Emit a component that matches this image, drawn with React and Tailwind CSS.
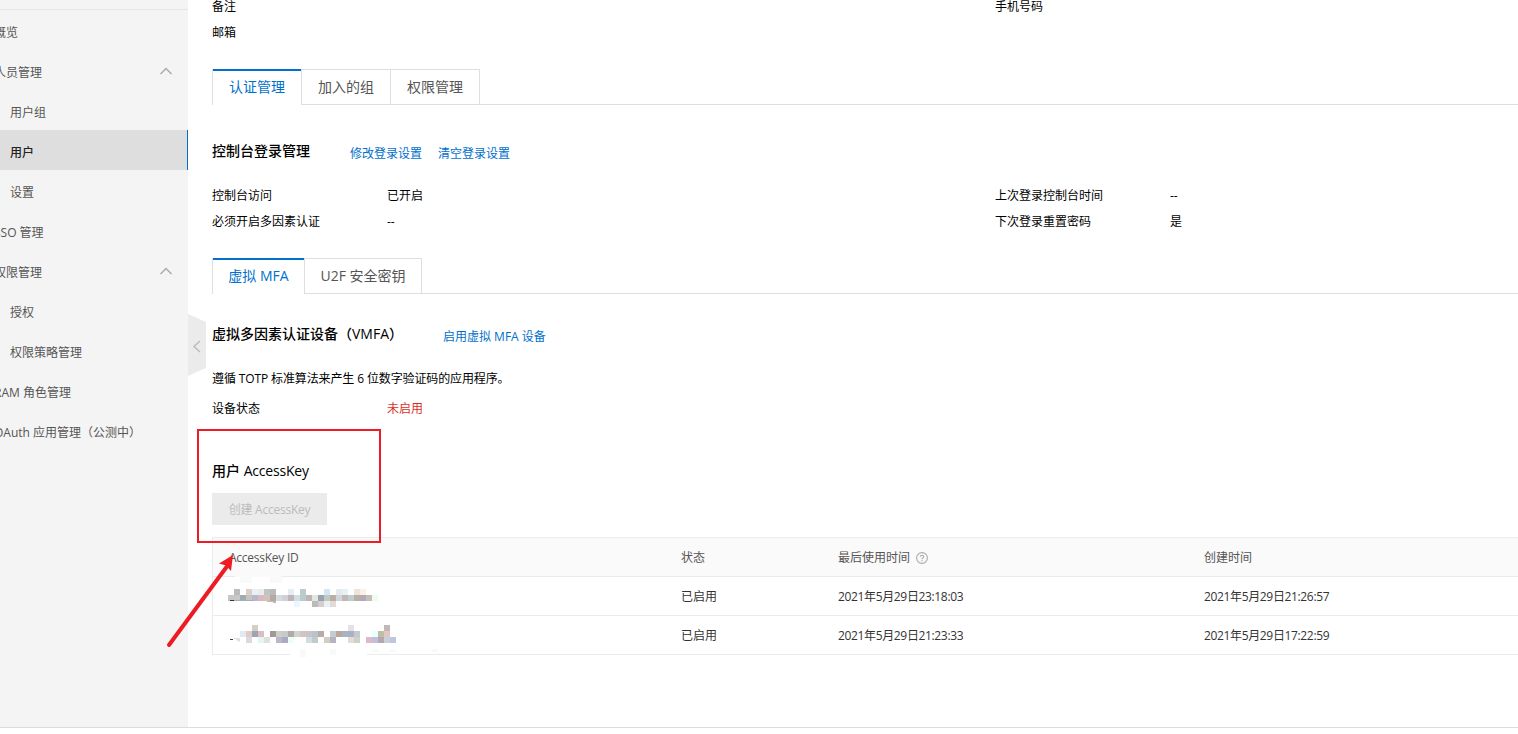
import React from 'react'

const NAV = [
  { label: '概览' },
  { label: '人员管理', open: true },
  { label: '用户组', sub: true },
  { label: '用户', sub: true, active: true },
  { label: '设置', sub: true },
  { label: 'SSO 管理' },
  { label: '权限管理', open: true },
  { label: '授权', sub: true },
  { label: '权限策略管理', sub: true },
  { label: 'RAM 角色管理' },
  { label: 'OAuth 应用管理（公测中）' },
]

const KEYS = [
  { status: '已启用', lastUsed: '2021年5月29日23:18:03', created: '2021年5月29日21:26:57' },
  { status: '已启用', lastUsed: '2021年5月29日21:23:33', created: '2021年5月29日17:22:59' },
]

// 6px blocks hiding the key ids: one line per block row, column -> colour
const MOSAIC = [
  [
    { 1: '#bbbbbb', 3: '#e0cdc9', 4: '#e6f1f9', 5: '#ebebef', 6: '#bdc5c2', 7: '#bbbbbb', 10: '#e4eef6', 12: '#bccccb', 16: '#cfe6f6', 18: '#e4eaeb', 19: '#e4f1f7', 21: '#ece3d9', 22: '#f9f1e6' },
    { 0: '#c7c7c7', 1: '#c7c7c7', 2: '#9eabb1', 3: '#c9c3c0', 4: '#b9b7c9', 5: '#d8b9c1', 6: '#d2c2b7', 7: '#b5aaa0', 8: '#d2dce3', 9: '#d0d0d9', 10: '#c1b4b8', 11: '#d2dee3', 12: '#bccac9', 13: '#c1b4b8', 14: '#e3e5e0', 15: '#93a5af', 16: '#c4c8be', 17: '#b9afa4', 18: '#d0d6e0', 19: '#c2b7b5', 20: '#c1cccf', 21: '#b9afa4', 22: '#b2aab6', 23: '#c7bcba', 24: '#ecfdee' },
    { 11: '#eaf7ff', 14: '#bbbbbb', 15: '#d8cdca', 16: '#e6f2f8', 17: '#e3dbd1' },
  ],
  [
    { 4: '#d8cdc6', 20: '#e6e1e6', 26: '#c1b7b9' },
    { 2: '#e1e9f2', 3: '#e0cbc7', 4: '#9aa5b5', 5: '#ddbcc5', 7: '#a19898', 8: '#d0cec4', 9: '#c7cac9', 10: '#b3a8ab', 11: '#cfd6cf', 12: '#d0c4c5', 13: '#c9c4c6', 14: '#b9c2d0', 15: '#b7ada3', 17: '#c5cdcd', 18: '#b8a89f', 19: '#aab3c6', 20: '#aab1c4', 21: '#c4c9cd', 24: '#e8ffff', 25: '#c0bca5', 26: '#e0c8c0' },
    { 3: '#dbd9df', 5: '#e4f7ee', 6: '#e0e0de', 8: '#bbb6c9', 9: '#a9acbf', 10: '#ecfff0', 13: '#d1dde3', 14: '#c1cbc8', 16: '#d5cdc4', 17: '#b7b2c4', 20: '#e4dbd2', 21: '#cdd2c8', 23: '#dcb9cb', 24: '#c6bcdc', 25: '#b3a8b0', 26: '#c8d0da', 27: '#c2c2e2' },
  ],
]

const Mosaic = ({ row }) => (
  <svg className="block" width="170" height="18" viewBox="0 0 170 18" shapeRendering="crispEdges">
    {MOSAIC[row].map((line, y) =>
      Object.entries(line).map(([x, fill]) => (
        <rect key={`${x}-${y}`} x={x * 6} y={y * 6} width="6" height="6" fill={fill} />
      ))
    )}
    {row === 0 ? (
      <>
        <path d="M6 11h20v1H6z" fill="#9fb0bd" />
        <path d="M2 11h4v1H2z" fill="#333" />
        <path d="M36 12h12v2z" fill="#bbb" />
      </>
    ) : (
      <>
        <path d="M2 14h3v1H2z" fill="#4b3a33" />
        <path d="M5 13h7v4z" fill="#dde1ec" />
      </>
    )}
  </svg>
)

const Sidebar = () => (
  <aside className="w-[188px] shrink-0 overflow-hidden bg-[#f4f4f4] pt-[9px]">
    <nav className="border-t border-[#e6e6e6]">
      {NAV.map((item) => (
        <div
          key={item.label}
          className={`flex h-10 items-center justify-between pt-1.5 ${
            item.active ? 'border-r border-[#0070cc] bg-[#dedede] font-medium text-[#222]' : 'text-[#555]'
          }`}
        >
          <span className={`whitespace-nowrap ${item.sub ? 'ml-2.5' : '-ml-1.5'}`}>{item.label}</span>
          {item.open && (
            <svg className="mr-4 mb-1" width="12" height="8" viewBox="0 0 12 8" fill="none" stroke="#aaa" strokeWidth="1.5">
              <path d="M0.5 7 6 1.5 11.5 7" />
            </svg>
          )}
        </div>
      ))}
    </nav>
  </aside>
)

const Tabs = ({ items }) => (
  <div className="flex h-9 text-sm">
    {items.map((item, i) => (
      <div
        key={item.label}
        className={`flex items-center justify-center whitespace-nowrap border-r border-[#dedede] ${item.width} ${
          i === 0 ? 'border-l text-[#0070cc] shadow-[inset_0_2px_0_#0070cc]' : 'border-t border-b text-[#555]'
        }`}
      >
        {item.label}
      </div>
    ))}
    <div className="flex-1 border-b border-[#dedede]" />
  </div>
)

const Field = ({ label, value, red }) => (
  <div className="flex h-[26px] w-[783px] shrink-0 items-center pt-0.5">
    <span className="w-[175px]">{label}</span>
    <span className={red ? 'text-[#d93026]' : ''}>{value}</span>
  </div>
)

const Title = ({ children }) => (
  <h3 className="whitespace-nowrap text-sm font-medium leading-5">{children}</h3>
)

const Help = () => (
  <svg className="ml-1.5" width="12" height="12" viewBox="0 0 12 12" fill="none" stroke="#aaa" strokeWidth="1.1">
    <circle cx="6" cy="6" r="5.4" />
    <path d="M4.3 4.8c0-1 .7-1.6 1.7-1.6s1.7.6 1.7 1.5C7.7 5.8 6 5.8 6 7.2M6 8.1v1.2" />
  </svg>
)

const COLS = 'grid grid-cols-[452px_157px_366px_1fr] items-center pl-4'

const KeyTable = () => (
  <div className="mt-3 border-l border-t border-[#ebebeb]">
    <div className={`${COLS} h-[39px] border-b border-[#ebebeb] bg-[#fafafa] pt-0.5 text-[#555]`}>
      <span className="tracking-[-0.25px]">AccessKey ID</span>
      <span>状态</span>
      <span className="flex items-center">
        最后使用时间
        <Help />
      </span>
      <span>创建时间</span>
    </div>
    {KEYS.map((k, i) => (
      <div key={k.created} className={`${COLS} h-[39px] border-b border-[#ebebeb] pt-0.5 text-[#333]`}>
        <div className={i === 0 ? '-ml-px pt-0.5' : '-ml-px pb-1'}>
          <Mosaic row={i} />
        </div>
        <span>{k.status}</span>
        <span className="tracking-[-0.35px]">{k.lastUsed}</span>
        <span className="tracking-[-0.35px]">{k.created}</span>
      </div>
    ))}
  </div>
)

// Leftover smudges around the blurred ids, the red frame and its arrow
const Annotations = () => (
  <svg className="pointer-events-none absolute left-0 top-0" width="1518" height="734" viewBox="0 0 1518 734">
    <g shapeRendering="crispEdges">
      <path d="M235 576h47v1h-47z" fill="#fafafa" />
      <path d="M240 577h12v6h-12zM270 577h12v6h-12z" fill="#f9f9f9" />
      <path d="M290 654h77v1h-77z" fill="#fff" />
      <path d="M300 649h6v8h-6zM330 649h6v6h-6zM372 649h6v3h-6zM390 649h6v3h-6zM432 649h6v3h-6z" fill="#f9f9f9" />
      <rect x="198" y="430" width="182" height="112" fill="none" stroke="#ed1c24" strokeWidth="2" />
    </g>
    <path d="M169 645 228 565" stroke="#ed1c24" strokeWidth="4" strokeLinecap="round" />
    <path d="M233 555 219 563.5 226 565.5 231 571z" fill="#ed1c24" />
  </svg>
)

const App = () => (
  <div className="relative h-[734px] w-[1518px] overflow-hidden bg-white font-['Open_Sans','Noto_Sans_CJK_SC',sans-serif] text-xs text-black">
    <div className="flex h-[728px] border-b border-[#dcdcdc]">
      <Sidebar />

      {/* Collapse handle */}
      <div className="-mr-[18px] mt-[314px] h-[62px] w-[18px] shrink-0">
        <svg width="18" height="62" viewBox="0 0 18 62">
          <path d="M0 0 18 8V54L0 62z" fill="#ebebeb" />
          <path d="M12 27 6 32.5 12 38" fill="none" stroke="#bbb" strokeWidth="1.5" />
        </svg>
      </div>

      <main className="-mt-[7px] min-w-0 flex-1 pl-6">
        <div className="flex">
          <Field label="备注" />
          <Field label="手机号码" />
        </div>
        <Field label="邮箱" />

        <div className="mt-6">
          <Tabs
            items={[
              { label: '认证管理', width: 'w-[90px]' },
              { label: '加入的组', width: 'w-[89px]' },
              { label: '权限管理', width: 'w-[89px]' },
            ]}
          />
        </div>

        <div className="mt-9 flex h-5 items-center">
          <Title>控制台登录管理</Title>
          <div className="ml-10 flex gap-4 pt-1.5 text-[#0070cc]">
            <a>修改登录设置</a>
            <a>清空登录设置</a>
          </div>
        </div>
        <div className="mt-[21px] flex">
          <Field label="控制台访问" value="已开启" />
          <Field label="上次登录控制台时间" value="--" />
        </div>
        <div className="flex">
          <Field label="必须开启多因素认证" value="--" />
          <Field label="下次登录重置密码" value="是" />
        </div>

        <div className="mt-6">
          <Tabs
            items={[
              { label: '虚拟 MFA', width: 'w-[93px]' },
              { label: 'U2F 安全密钥', width: 'w-[117px]' },
            ]}
          />
        </div>

        <div className="mt-[30px] flex h-5 items-center">
          <div className="w-[231px]">
            <Title>虚拟多因素认证设备（VMFA）</Title>
          </div>
          <a className="pt-1.5 text-[#0070cc]">启用虚拟 MFA 设备</a>
        </div>
        <p className="mt-[21px] flex h-[26px] items-center pt-0.5 tracking-[-0.12px]">
          遵循 TOTP 标准算法来产生 6 位数字验证码的应用程序。
        </p>
        <div className="mt-1">
          <Field label="设备状态" value="未启用" red />
        </div>

        <div className="mt-10">
          <Title>
            用户 <span className="tracking-[-0.2px]">AccessKey</span>
          </Title>
        </div>
        <button disabled className="mt-3 flex h-8 w-[115px] items-center justify-center whitespace-nowrap bg-[#ebebeb] pt-0.5 tracking-[-0.25px] text-[#bbb]">
          创建 AccessKey
        </button>
        <KeyTable />
      </main>
    </div>
    <Annotations />
  </div>
)

export default App
